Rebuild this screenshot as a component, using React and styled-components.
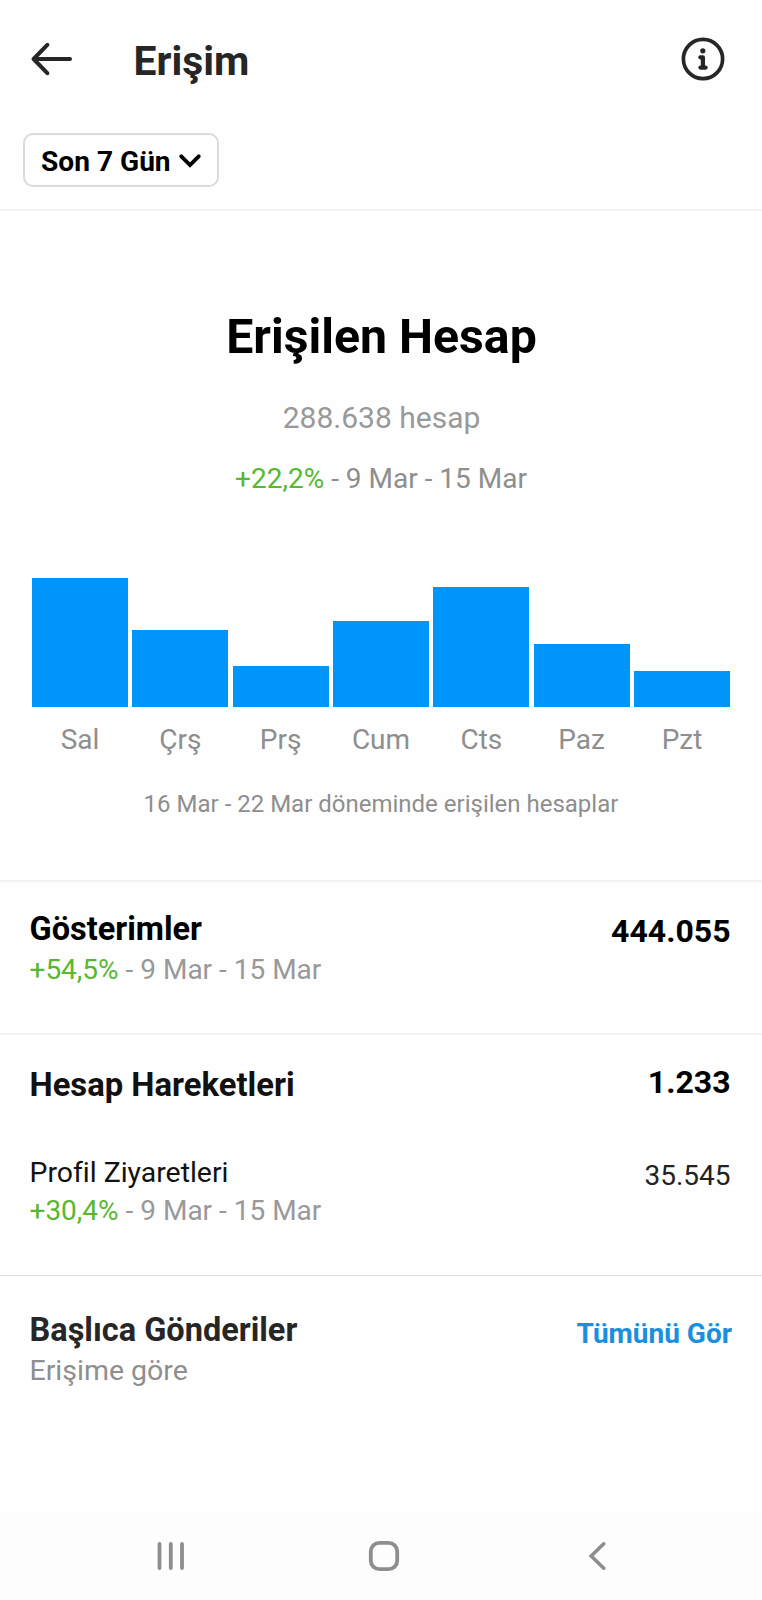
import React from 'react';
import styled, { createGlobalStyle } from 'styled-components';

const GlobalStyle = createGlobalStyle`
  * {
    box-sizing: border-box;
  }
  body {
    margin: 0;
    background: #fefefe;
    font-family: Roboto, 'Liberation Sans', sans-serif;
    font-variant-ligatures: none;
  }
`;

const Screen = styled.div`
  display: flex;
  flex-direction: column;
  width: 762px;
  height: 1600px;
  overflow: hidden;
  background: #fefefe;
`;

const Header = styled.header`
  display: flex;
  align-items: center;
  height: 118px;
  padding: 0 37px 0 31px;
`;

const IconButton = styled.button`
  display: flex;
  padding: 0;
  border: 0;
  background: none;
  color: ${({ $color }) => $color || '#262626'};
`;

const Title = styled.h1`
  flex: 1;
  margin: 0 0 0 60.5px;
  padding-top: 4px;
  font-size: 40.8px;
  line-height: 48px;
  font-weight: 700;
  color: #262626;
`;

const FilterBar = styled.div`
  height: 93px;
  padding: 15px 23px 0;
  border-bottom: 2px solid #f3f3f3;
`;

const FilterButton = styled.button`
  display: flex;
  align-items: center;
  gap: 8.5px;
  width: 196px;
  height: 54px;
  padding: 0 0 0 16px;
  border: 2px solid #dbdbdb;
  border-radius: 10px;
  background: #fefefe;
  color: #000;
  font-family: inherit;
  font-size: 28.1px;
  line-height: 34px;
  font-weight: 700;

  span {
    padding-top: 3px;
  }

  svg {
    margin-top: 1px;
  }
`;

const Overview = styled.section`
  display: flex;
  flex-direction: column;
  height: 671px;
  padding: 98px 32px 0;
  border-bottom: 2px solid #f2f2f2;
  text-align: center;
`;

const Headline = styled.h2`
  margin: 0;
  padding-left: 1px;
  font-size: 48.2px;
  line-height: 56px;
  font-weight: 700;
  color: #000;
`;

const AccountCount = styled.p`
  margin: 35px 0 0;
  padding-left: 1px;
  font-size: 30px;
  line-height: 36px;
  color: #999;
`;

const ChangeText = styled.p`
  margin: ${({ $top }) => $top || 0}px 0 0;
  font-size: 28px;
  line-height: 34px;
  color: ${({ $color }) => $color || '#999'};
`;

const Positive = styled.span`
  color: #58b82f;
`;

const Chart = styled.div`
  display: grid;
  grid-template-columns: repeat(7, 1fr);
  column-gap: 4.3px;
  margin-top: 82px;
`;

const Day = styled.div`
  display: flex;
  flex-direction: column;
`;

const BarTrack = styled.div`
  display: flex;
  align-items: flex-end;
  height: 129px;
`;

const Bar = styled.div`
  width: 100%;
  background: #0095f8;
`;

const DayLabel = styled.span`
  margin-top: 16px;
  font-size: 28px;
  line-height: 34px;
  color: #8e8e8e;
`;

const Caption = styled.p`
  margin: 33px 0 0;
  font-size: 24px;
  line-height: 28px;
  color: #8e8e8e;
`;

const Section = styled.section`
  height: ${({ $height }) => $height}px;
  padding: ${({ $top }) => $top}px 31.5px 0 29.5px;
  border-bottom: ${({ $border }) => $border || 'none'};
`;

const Row = styled.div`
  display: flex;
  justify-content: space-between;
  align-items: flex-start;
  margin-top: ${({ $top }) => $top || 0}px;
`;

const SectionTitle = styled.h3`
  margin: 0;
  font-size: ${({ $size }) => $size || 32.5}px;
  line-height: 38px;
  font-weight: 700;
  color: ${({ $color }) => $color || '#000'};
`;

const Total = styled.span`
  margin-top: ${({ $shift }) => $shift}px;
  font-size: 32px;
  line-height: 38px;
  font-weight: 700;
  color: #000;
`;

const ItemLabel = styled.p`
  margin: 0;
  font-size: 28.4px;
  line-height: 34px;
  color: #111;
`;

const ItemValue = styled.span`
  margin-top: 3px;
  font-size: 28px;
  line-height: 34px;
  color: #222;
`;

const Subtitle = styled.p`
  margin: 3px 0 0;
  font-size: 28.5px;
  line-height: 34px;
  color: #8e8e8e;
`;

const SeeAll = styled.a`
  margin: 6px -1.5px 0 0;
  font-size: 28px;
  line-height: 34px;
  font-weight: 700;
  color: #1a8fe0;
`;

const NavBar = styled.nav`
  display: flex;
  align-items: center;
  justify-content: space-between;
  height: 88px;
  margin-top: auto;
  padding: 0 155px 0 156px;
  background: #fdfdfd;
`;

const BackArrow = () => (
  <svg width="42" height="34" viewBox="0 0 42 34" fill="none" stroke="currentColor" strokeWidth="4" strokeLinecap="round" strokeLinejoin="round">
    <path d="M39 17H3M16.3 2.8L2.6 17L16.3 31.2" />
  </svg>
);

const InfoIcon = () => (
  <svg width="44" height="44" viewBox="0 0 44 44" fill="none" stroke="currentColor">
    <circle cx="22" cy="22" r="19.6" strokeWidth="3.7" />
    <circle cx="21.8" cy="13.8" r="2.6" fill="currentColor" stroke="none" />
    <path d="M19.3 20.3H21.9V30.5M19.4 30.6H24.6" strokeWidth="4.2" strokeLinecap="round" strokeLinejoin="round" />
  </svg>
);

const ChevronDown = () => (
  <svg width="22" height="14" viewBox="0 0 22 14" fill="none" stroke="currentColor" strokeWidth="3.8" strokeLinecap="round">
    <path d="M2.3 2.3L11 11L19.7 2.3" />
  </svg>
);

const RecentsIcon = () => (
  <svg width="30" height="30" viewBox="0 0 30 30" stroke="currentColor" strokeWidth="3.8" strokeLinecap="round">
    <path d="M3.5 3V27M14.8 3V27M26 3V27" />
  </svg>
);

// the home key sits a little left of centre between its neighbours
const HomeIcon = () => (
  <svg width="37" height="32" viewBox="0 0 37 32" fill="none" stroke="currentColor" strokeWidth="3.8">
    <rect x="2.8" y="2.8" width="26.4" height="26.4" rx="8.5" />
  </svg>
);

const NavBackIcon = () => (
  <svg width="20" height="30" viewBox="0 0 20 30" fill="none" stroke="currentColor" strokeWidth="3.6" strokeLinecap="round">
    <path d="M16.8 2.8L4.2 15L16.8 27.2" />
  </svg>
);

const days = [
  { label: 'Sal', value: 129 },
  { label: 'Çrş', value: 77.3 },
  { label: 'Prş', value: 41.3 },
  { label: 'Cum', value: 86 },
  { label: 'Cts', value: 120.4 },
  { label: 'Paz', value: 63.3 },
  { label: 'Pzt', value: 35.8 }
];

const maxValue = Math.max(...days.map(day => day.value));

const Change = ({ percent, ...rest }) => (
  <ChangeText {...rest}>
    <Positive>{percent}</Positive> - 9 Mar - 15 Mar
  </ChangeText>
);

const ReachChart = () => (
  <Chart>
    {days.map(({ label, value }) => (
      <Day key={label}>
        <BarTrack>
          <Bar style={{ height: `${(value / maxValue) * 100}%` }} />
        </BarTrack>
        <DayLabel>{label}</DayLabel>
      </Day>
    ))}
  </Chart>
);

const App = () => (
  <>
    <GlobalStyle />
    <Screen>
      <Header>
        <IconButton aria-label="Geri">
          <BackArrow />
        </IconButton>
        <Title>Erişim</Title>
        <IconButton aria-label="Bilgi">
          <InfoIcon />
        </IconButton>
      </Header>

      <FilterBar>
        <FilterButton>
          <span>Son 7 Gün</span>
          <ChevronDown />
        </FilterButton>
      </FilterBar>

      <Overview>
        <Headline>Erişilen Hesap</Headline>
        <AccountCount>288.638 hesap</AccountCount>
        <Change percent="+22,2%" $top={26} $color="#8e8e8e" />
        <ReachChart />
        <Caption>16 Mar - 22 Mar döneminde erişilen hesaplar</Caption>
      </Overview>

      <Section $height={153} $top={28} $border="2px solid #f3f3f3">
        <Row>
          <SectionTitle>Gösterimler</SectionTitle>
          <Total $shift={2}>444.055</Total>
        </Row>
        <Change percent="+54,5%" $top={3} />
      </Section>

      <Section $height={241} $top={31} $border="1px solid #dedede">
        <Row>
          <SectionTitle $size={32.8} $color="#111">Hesap Hareketleri</SectionTitle>
          <Total $shift={-3}>1.233</Total>
        </Row>
        <Row $top={52}>
          <ItemLabel>Profil Ziyaretleri</ItemLabel>
          <ItemValue>35.545</ItemValue>
        </Row>
        <Change percent="+30,4%" $top={1} />
      </Section>

      <Section $height={200} $top={35}>
        <Row>
          <SectionTitle $color="#262626">Başlıca Gönderiler</SectionTitle>
          <SeeAll>Tümünü Gör</SeeAll>
        </Row>
        <Subtitle>Erişime göre</Subtitle>
      </Section>

      <NavBar>
        <IconButton $color="#8e8e8e" aria-label="Son uygulamalar">
          <RecentsIcon />
        </IconButton>
        <IconButton $color="#8e8e8e" aria-label="Ana ekran">
          <HomeIcon />
        </IconButton>
        <IconButton $color="#8e8e8e" aria-label="Geri">
          <NavBackIcon />
        </IconButton>
      </NavBar>
    </Screen>
  </>
);

export default App;
